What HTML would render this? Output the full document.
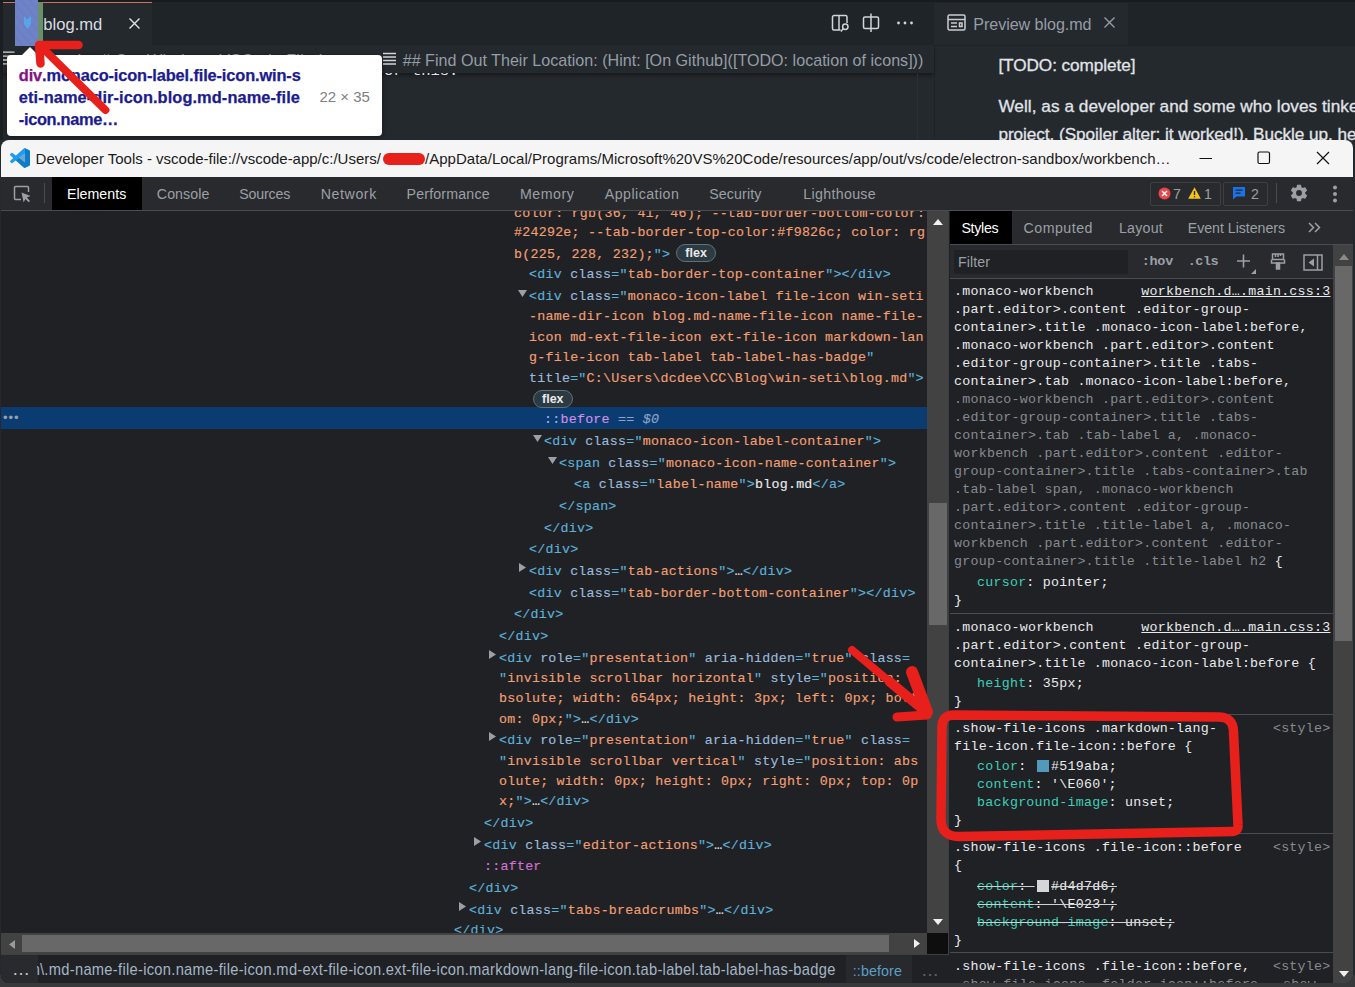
<!DOCTYPE html>
<html lang="en">
<head>
<meta charset="utf-8">
<title>DevTools screenshot</title>
<style>
*{box-sizing:border-box;margin:0;padding:0}
html,body{width:1355px;height:987px;overflow:hidden;background:#24292e}
body{position:relative;font-family:"Liberation Sans",sans-serif;color:#e1e4e8}
.abs{position:absolute}
.t{position:absolute;white-space:nowrap;line-height:1}
.mono{font-family:"Liberation Mono",monospace}
/* ---------- VS Code background ---------- */
#vs{position:absolute;left:0;top:0;width:1355px;height:150px;background:#1f2428;overflow:hidden}
#vs .edbg{position:absolute;left:0;top:46px;width:934px;height:100px;background:#24292e}
#vs .tab1{position:absolute;left:3px;top:2px;width:149px;height:43px;background:#24292e;border-top:1px solid #cf735f}
#vs .grp2{position:absolute;left:934px;top:0;width:421px;height:46px;background:#1f2428;border-left:1px solid #1b1f23}
#vs .tab2{position:absolute;left:934px;top:3px;width:194px;height:42px;background:#24292e}
#vs .prev{position:absolute;left:935px;top:46px;width:420px;height:100px;background:#24292e}

#vs .strip{position:absolute;left:0;top:0;width:3px;height:140px;background:#1b1f23}
#vs .hl-blue{position:absolute;left:15px;top:0;width:23px;height:46px;background:#6b84c6;background-image:repeating-linear-gradient(50deg,rgba(140,90,200,.0) 0 5px,rgba(140,90,200,.22) 5px 7px)}
#vs .hl-green{position:absolute;left:38px;top:2px;width:5px;height:43px;background:#6b8f66}
#vs .bc{position:absolute;left:3px;top:45px;width:931px;height:28px;background:#24292e;box-shadow:0 3px 4px -1px rgba(0,0,0,.45)}
#vs .vline{position:absolute;left:917px;top:73px;width:1px;height:70px;background:#2b3036}
.g{color:#959da5}
/* ---------- tooltip ---------- */
#tip{position:absolute;left:7px;top:55px;width:374.500px;height:80.500px;background:#fff;border-radius:4px;box-shadow:0 1px 4px rgba(0,0,0,.4)}

#tip .ptr{position:absolute;left:14px;top:-8px;width:0;height:0;border-left:9px solid transparent;border-right:9px solid transparent;border-bottom:9px solid #fff}
#tip .l{position:absolute;left:12px;white-space:nowrap;font-weight:bold;font-size:16.4px;line-height:1;color:#1c1c8c;-webkit-text-stroke:0.25px currentColor}
#tip .l b{color:#881280}
#tip .dim{position:absolute;left:312px;top:34px;font-size:15px;line-height:1;color:#808080;white-space:nowrap}
/* ---------- DevTools window ---------- */
#dt{position:absolute;left:1px;top:140px;width:1352px;height:843px;background:#202124;border-radius:8px;overflow:hidden}
#under{position:absolute;left:0;top:975px;width:1355px;height:12px;background:#38393b}
#dt .title{position:absolute;left:0;top:0;width:100%;height:37px;background:#f5f5f5}
#dt .bar{position:absolute;left:0;top:37px;width:100%;height:34px;background:#292a2d;border-bottom:1px solid #494c50}
#dt .tab{top:10px;font-size:14.2px;color:#9aa0a6;transform:scaleY(1.09);transform-origin:0 70%}
#dt .tab.on{color:#fff}
/* elements panel */
#el{position:absolute;left:0;top:71px;width:926px;height:722px;overflow:hidden;background:#202124}
#el .r{position:absolute;white-space:pre;font-family:"Liberation Mono",monospace;font-size:13.3px;letter-spacing:0.246px;line-height:20px;height:20px;-webkit-text-stroke:0.15px currentColor}
#el .sel{position:absolute;left:0;top:196px;width:926px;height:22px;background:#0a3c72}
.tg{color:#5db0d7}.an{color:#9bbbdc}.av{color:#f19f74}.tx{color:#e8eaed}
.ps{color:#cf8fe3}.ps1{color:#9fb0f0}.ps2{color:#d670d6}.eq{color:#8fa4c8}
.flex{letter-spacing:0;-webkit-text-stroke:0;display:inline-block;font-family:"Liberation Sans",sans-serif;font-size:12.5px;font-weight:bold;line-height:16px;height:18px;padding:0 8px;border:1px solid #5f717b;border-radius:9px;background:#2c3a42;color:#e8eaed;vertical-align:1px}
/* styles pane */
#st{position:absolute;left:948.5px;top:71px;width:383.5px;height:776px;overflow:hidden;background:#202124}
#st .stab{top:10px;font-size:14.2px;color:#9aa0a6;transform:scaleY(1.09);transform-origin:0 70%}
#t-filter,#t-cr1,#t-cr2{transform:scaleY(1.07);transform-origin:0 70%}
#st .stab.on{color:#fff}
#st .sl{position:absolute;white-space:pre;font-family:"Liberation Mono",monospace;font-size:13.3px;letter-spacing:0.246px;line-height:18px;height:18px;color:#e8eaed}
.w{color:#e8eaed}.gy{color:#858b90}.pn{color:#3dcfb9}
#st .lk{text-decoration:underline;color:#e8eaed}
#st .sl.gy{color:#858b90}
.sw{display:inline-block;width:12px;height:12px;margin-left:2px;margin-right:2.500px;vertical-align:-1.500px}
.st{text-decoration:line-through;text-decoration-color:#d0d0d0}
#vs .topstrip{position:absolute;left:0;top:0;width:1355px;height:2px;background:#191c20}
#t-p1,#t-p2,#t-p3{-webkit-text-stroke:0.3px #e1e4e8}
#t-tb0{letter-spacing:0.032px;margin-left:-0.10px}
#t-tb1{letter-spacing:0.077px;margin-left:-0.20px}
#t-tb2{letter-spacing:-0.164px;margin-left:0.30px}
#t-tb3{letter-spacing:0.565px;margin-left:-0.20px}
#t-tb4{letter-spacing:0.171px;margin-left:-0.40px}
#t-tb5{letter-spacing:0.558px;margin-left:0.90px}
#t-tb6{letter-spacing:0.462px;margin-left:0.80px}
#t-tb7{letter-spacing:0.144px;margin-left:0.20px}
#t-tb8{letter-spacing:0.328px;margin-left:0.30px}
#t-blog{letter-spacing:-0.007px;margin-left:0.30px}
#t-bc1{letter-spacing:0.009px;margin-left:-0.30px}
#t-prev{letter-spacing:-0.051px;margin-left:0.30px}
#t-p1{letter-spacing:-0.068px;margin-left:0.40px}
#t-tip1{letter-spacing:-0.137px;margin-left:-0.20px}
#t-tip2{letter-spacing:0.072px;margin-left:-0.20px}
#t-tip3{letter-spacing:-0.338px;margin-left:-0.20px}
#t-dim{letter-spacing:-0.024px;margin-left:0.50px}
#t-ttl1{letter-spacing:-0.008px;margin-left:0.10px}
#t-ttl2{letter-spacing:0.019px;margin-left:0.00px}
#t-s0{letter-spacing:-0.273px;margin-left:0.01px}
#t-s1{letter-spacing:0.504px;margin-left:0.00px}
#t-s2{letter-spacing:0.232px;margin-left:0.00px}
#t-s3{letter-spacing:-0.040px;margin-left:0.00px}
#t-filter{letter-spacing:0.078px;margin-left:0.00px}
#t-hov{letter-spacing:-0.277px;margin-left:0.70px}
#t-cls{letter-spacing:-0.552px;margin-left:0.80px}
#t-cr1{letter-spacing:0.293px;margin-left:-0.50px}
#t-cr2{letter-spacing:0.089px;margin-left:0.80px}
#t-sr1{letter-spacing:-0.125px;margin-left:0.58px}
#t-p2{letter-spacing:0.048px;margin-left:0.40px}
#t-p3{letter-spacing:-0.059px;margin-left:0.40px}
#t-bc0{letter-spacing:0.341px;margin-left:0.00px}
</style>
</head>
<body>
<div id="vs">
  <div class="edbg"></div>
  <div class="tab1"></div>
  <div class="grp2"></div>
  <div class="tab2"></div>
  <div class="prev"></div>

  <div class="strip"></div>
  <div class="topstrip"></div>
  <div class="bc"></div>
  <div class="vline"></div>
  <div class="hl-blue"></div>
  <div class="hl-green"></div>
  <svg class="abs" style="left:22px;top:15px" width="11" height="15" viewBox="0 0 11 15"><path d="M2 1 L5.5 4.5 L9 1 L9 9 L5.5 14 L2 9 Z" fill="#58a6e8"/></svg>
  <div class="t" id="t-blog" style="left:43px;top:17px;font-size:16.6px;color:#d9dce0">blog.md</div>
  <svg class="abs" style="left:128px;top:17px" width="13" height="13" viewBox="0 0 13 13"><path d="M1.5 1.5 L11.5 11.5 M11.5 1.5 L1.5 11.5" stroke="#e1e4e8" stroke-width="1.4" fill="none"/></svg>
  <!-- editor actions -->
  <svg class="abs" style="left:831px;top:13.5px" width="19" height="19" viewBox="0 0 19 19" fill="none" stroke="#d1d5da" stroke-width="1.5"><path d="M16 9 V3 a1.500 1.500 0 0 0 -1.500 -1.500 H3 a1.500 1.500 0 0 0 -1.500 1.500 V14.500 a1.500 1.500 0 0 0 1.500 1.500 H9.500 M8 1.500 V16"/><circle cx="14.300" cy="12.800" r="2.700"/><path d="M12.300 14.800 L9.800 17.400"/></svg>
  <svg class="abs" style="left:862px;top:13px" width="18" height="20" viewBox="0 0 18 20" fill="none" stroke="#d1d5da" stroke-width="1.5"><rect x="1.500" y="4" width="15" height="11.500" rx="1.500"/><path d="M9 0.500 V19"/></svg>
  <svg class="abs" style="left:896px;top:20px" width="18" height="6" viewBox="0 0 18 6" fill="#d1d5da"><circle cx="2.500" cy="3" r="1.400"/><circle cx="9" cy="3" r="1.400"/><circle cx="15.500" cy="3" r="1.400"/></svg>
  <!-- breadcrumbs -->
  <div class="t g" id="t-bc0" style="left:22px;top:51.500px;font-size:16.100px">blog.md &gt; # Get Windows VSCode File Icons &gt;</div>
  <svg class="abs" style="left:3px;top:51px" width="14" height="14" viewBox="0 0 14 14" stroke="#d1d5da" stroke-width="1.300"><path d="M0 1.200 H11.500 M0 5.100 H11.500 M0 9 H11.500 M0 12.900 H11.500"/></svg>
  <svg class="abs" style="left:383px;top:52px" width="14" height="14" viewBox="0 0 14 14" stroke="#d1d5da" stroke-width="1.3"><path d="M0 1.5 H13 M0 5 H13 M0 8.5 H13 M0 12 H13"/></svg>
  <div class="t g" id="t-bc1" style="left:403px;top:51.500px;font-size:16.1px">## Find Out Their Location: (Hint: [On Github]([TODO: location of icons]))</div>
  <div class="t mono" id="t-orthis" style="left:384px;top:64px;font-size:15.500px;color:#e1e4e8;clip-path:inset(9px 0 0 0)">or this:</div>
  <!-- preview tab -->
  <svg class="abs" style="left:946.500px;top:14px" width="19" height="17" viewBox="0 0 19 17" fill="none" stroke="#c9cdd2" stroke-width="1.500"><rect x="1" y="1" width="17" height="15" rx="1.500"/><path d="M1 5.500 H18 M4 9 H10 M4 12.500 H10 M12.500 9 H15 V12.500 H12.500 Z"/></svg>
  <div class="t g" id="t-prev" style="left:973px;top:16px;font-size:16.1px">Preview blog.md</div>
  <svg class="abs" style="left:1103px;top:16px" width="13" height="13" viewBox="0 0 13 13"><path d="M1.5 1.5 L11.5 11.5 M11.5 1.5 L1.5 11.5" stroke="#959da5" stroke-width="1.4" fill="none"/></svg>
  <div class="t" id="t-p1" style="left:998px;top:57px;font-size:17.2px;color:#e1e4e8">[TODO: complete]</div>
  <div class="t" id="t-p2" style="left:998px;top:97.5px;font-size:17.2px;color:#e1e4e8">Well, as a developer and some who loves tinke</div>
  <div class="t" id="t-p3" style="left:998px;top:125.5px;font-size:17.2px;color:#e1e4e8">project. (Spoiler alter: it worked!). Buckle up, he</div>
</div>
<div id="tip"><div class="ptr"></div>
  <div class="l" id="t-tip1" style="top:12px"><b>div</b>.monaco-icon-label.file-icon.win-s</div>
  <div class="l" id="t-tip2" style="top:34px">eti-name-dir-icon.blog.md-name-file</div>
  <div class="l" id="t-tip3" style="top:56px">-icon.name…</div>
  <div class="dim" id="t-dim">22 × 35</div>
</div>
<div id="under"></div>
<div id="dt">
  <div class="title">
    <svg class="abs" style="left:9px;top:8px" width="20" height="20" viewBox="0 0 100 100"><path d="M96.5 10.8 75.9 0.9a6.2 6.2 0 0 0-7.1 1.2L29.4 38 12.2 25a4.2 4.2 0 0 0-5.3.2L1.4 30.300000000000001a4.2 4.2 0 0 0 0 6.2L16.3 50 1.4 63.6a4.2 4.2 0 0 0 0 6.2l5.5 5a4.2 4.2 0 0 0 5.3.2L29.4 62l39.400000000000006 36a6.2 6.2 0 0 0 7.1 1.2l20.6-9.9A6.2 6.2 0 0 0 100 83.7V16.400000000000002a6.2 6.2 0 0 0-3.5-5.6zM75 72.7 45.1 50 75 27.3z" fill="#1f9cf0"/><path d="M75.9 99.1a6.2 6.2 0 0 1-7.1-1.2L29.4 62 75 27.3V0.9l20.6 9.9A6.2 6.2 0 0 1 100 16.4v67.3a6.2 6.2 0 0 1-3.5 5.6z" fill="#0065a9" opacity=".55"/></svg>
    <div class="t" id="t-ttl1" style="left:34.5px;top:10.5px;font-size:15px;color:#1b1b1b">Developer Tools - vscode-file://vscode-app/c:/Users/</div>
    <div class="abs" style="left:382px;top:13px;width:42px;height:12px;border-radius:6px;background:#e8201c"></div>
    <div class="t" id="t-ttl2" style="left:424px;top:10.5px;font-size:15px;color:#1b1b1b">/AppData/Local/Programs/Microsoft%20VS%20Code/resources/app/out/vs/code/electron-sandbox/workbench…</div>
    <svg class="abs" style="left:1198px;top:17px" width="14" height="3" viewBox="0 0 14 3"><path d="M0.5 1.5 H13" stroke="#111" stroke-width="1.2"/></svg>
    <svg class="abs" style="left:1256px;top:11px" width="14" height="14" viewBox="0 0 14 14"><rect x="1" y="1" width="11.5" height="11.5" rx="1.5" fill="none" stroke="#111" stroke-width="1.2"/></svg>
    <svg class="abs" style="left:1315px;top:11px" width="14" height="14" viewBox="0 0 14 14"><path d="M1 1 L13 13 M13 1 L1 13" stroke="#111" stroke-width="1.2" fill="none"/></svg>
  </div>
  <div class="bar">
    <svg class="abs" style="left:12px;top:8px" width="19" height="19" viewBox="0 0 19 19" fill="none"><path d="M8 14.5 H2.5 a1 1 0 0 1 -1-1 V2.5 a1 1 0 0 1 1-1 H14.5 a1 1 0 0 1 1 1 V7" stroke="#9aa0a6" stroke-width="1.5"/><path d="M8.5 7.5 L17.5 11 L13.8 12.6 L17 16 L15.6 17.3 L12.4 13.9 L10.6 17.5 Z" fill="#9aa0a6"/></svg>
    <div class="abs" style="left:43px;top:6px;width:1px;height:20px;background:#4a4c50"></div>
    <div class="abs" style="left:51px;top:0;width:90px;height:33px;background:#000"></div>
    <div class="t tab on" id="t-tb0" style="left:66px">Elements</div>
    <div class="t tab" id="t-tb1" style="left:156px">Console</div>
    <div class="t tab" id="t-tb2" style="left:238px">Sources</div>
    <div class="t tab" id="t-tb3" style="left:320px">Network</div>
    <div class="t tab" id="t-tb4" style="left:406px">Performance</div>
    <div class="t tab" id="t-tb5" style="left:518px">Memory</div>
    <div class="t tab" id="t-tb6" style="left:603px">Application</div>
    <div class="t tab" id="t-tb7" style="left:708px">Security</div>
    <div class="t tab" id="t-tb8" style="left:802px">Lighthouse</div>
    <!-- counters -->
    <div class="abs" style="left:1149px;top:5px;width:71px;height:24px;border:1px solid #3c4043;border-radius:2px"></div>
    <svg class="abs" style="left:1157px;top:10px" width="13" height="13" viewBox="0 0 13 13"><circle cx="6.5" cy="6.5" r="6" fill="#e9454d"/><path d="M4 4 L9 9 M9 4 L4 9" stroke="#fff" stroke-width="1.4"/></svg>
    <div class="t" id="t-c7" style="left:1172px;top:10px;font-size:14.2px;color:#9aa0a6">7</div>
    <svg class="abs" style="left:1187px;top:10px" width="13" height="12" viewBox="0 0 13 12"><path d="M6.5 0.3 L12.8 11.7 H0.2 Z" fill="#f5c518"/><path d="M6.5 4 V8" stroke="#292a2d" stroke-width="1.4"/><circle cx="6.5" cy="9.8" r=".8" fill="#292a2d"/></svg>
    <div class="t" id="t-c1" style="left:1203px;top:10px;font-size:14.2px;color:#9aa0a6">1</div>
    <div class="abs" style="left:1222px;top:5px;width:45px;height:24px;border:1px solid #3c4043;border-radius:2px"></div>
    <svg class="abs" style="left:1231px;top:9px" width="14" height="14" viewBox="0 0 14 14"><path d="M1 1 H13 V10.5 H4.5 L1 13.5 Z" fill="#1a73e8"/><path d="M3.5 4.2 H10.5 M3.5 7.2 H8.5" stroke="#292a2d" stroke-width="1.2"/></svg>
    <div class="t" id="t-c2" style="left:1250px;top:10px;font-size:14.2px;color:#9aa0a6">2</div>
    <div class="abs" style="left:1275px;top:6px;width:1px;height:20px;background:#4a4c50"></div>
    <svg class="abs" style="left:1288px;top:6px" width="20" height="20" viewBox="0 0 24 24"><path fill="#9aa0a6" d="M19.43 12.98c.04-.32.07-.64.07-.98s-.03-.66-.07-.98l2.11-1.65a.5.5 0 0 0 .12-.64l-2-3.46a.5.5 0 0 0-.61-.22l-2.49 1a7.3 7.3 0 0 0-1.69-.98l-.38-2.65A.49.49 0 0 0 14 2h-4a.49.49 0 0 0-.49.42l-.38 2.65c-.61.25-1.17.59-1.69.98l-2.49-1a.5.5 0 0 0-.61.22l-2 3.46a.5.5 0 0 0 .12.64l2.11 1.65c-.04.32-.07.65-.07.98s.03.66.07.98l-2.11 1.65a.5.5 0 0 0-.12.64l2 3.46c.12.22.39.3.61.22l2.49-1c.52.4 1.08.73 1.69.98l.38 2.65c.03.24.24.42.49.42h4c.25 0 .46-.18.49-.42l.38-2.65c.61-.25 1.17-.59 1.69-.98l2.49 1c.23.09.49 0 .61-.22l2-3.46a.5.5 0 0 0-.12-.64l-2.11-1.65zM12 15.5a3.5 3.500 0 1 1 0-7 3.500 3.500 0 0 1 0 7z"/></svg>
    <svg class="abs" style="left:1331px;top:8px" width="6" height="18" viewBox="0 0 6 18" fill="#9aa0a6"><circle cx="3" cy="2.500" r="2"/><circle cx="3" cy="9" r="2"/><circle cx="3" cy="15.500" r="2"/></svg>
  </div>
<div id="el">
<div class="sel"></div>
<div class="t" id="t-dots" style="left:2px;top:200px;font-size:13px;color:#9aa0a6;letter-spacing:1px">•••</div>
<div class="r" id="t-e0" style="left:513px;top:-7px"><span class="av">color: rgb(36, 41, 46); --tab-border-bottom-color:</span></div>
<div class="r" id="t-e1" style="left:513px;top:12px"><span class="av">#24292e; --tab-border-top-color:#f9826c; color: rg</span></div>
<div class="r" id="t-e2" style="left:513px;top:33px"><span class="av">b(225, 228, 232);</span><span class="tg">"&gt;</span><span class="flex" style="margin-left:6px">flex</span></div>
<div class="r" id="t-e3" style="left:528px;top:54px"><span class="tg">&lt;div </span><span class="an">class</span><span class="tg">="</span><span class="av">tab-border-top-container</span><span class="tg">"&gt;&lt;/div&gt;</span></div>
<svg class="abs" style="left:516.5px;top:79px" width="9" height="7" viewBox="0 0 9 7"><path d="M0 0 H9 L4.5 7 Z" fill="#9aa0a6"/></svg>
<div class="r" id="t-e4" style="left:528px;top:76px"><span class="tg">&lt;div </span><span class="an">class</span><span class="tg">="</span><span class="av">monaco-icon-label file-icon win-seti</span></div>
<div class="r" id="t-e5" style="left:528px;top:96px"><span class="av">-name-dir-icon blog.md-name-file-icon name-file-</span></div>
<div class="r" id="t-e6" style="left:528px;top:117px"><span class="av">icon md-ext-file-icon ext-file-icon markdown-lan</span></div>
<div class="r" id="t-e7" style="left:528px;top:137px"><span class="av">g-file-icon tab-label tab-label-has-badge</span><span class="tg">"</span></div>
<div class="r" id="t-e8" style="left:528px;top:158px"><span class="an">title</span><span class="tg">="</span><span class="av">C:\Users\dcdee\CC\Blog\win-seti\blog.md</span><span class="tg">"&gt;</span></div>
<div class="r" id="t-e9" style="left:532px;top:179px"><span class="flex">flex</span></div>
<div class="r" id="t-e10" style="left:543px;top:199px"><span class="ps1">::</span><span class="ps">before</span><span class="eq"> == <i>$0</i></span></div>
<svg class="abs" style="left:531.5px;top:224px" width="9" height="7" viewBox="0 0 9 7"><path d="M0 0 H9 L4.5 7 Z" fill="#9aa0a6"/></svg>
<div class="r" id="t-e11" style="left:543px;top:221px"><span class="tg">&lt;div </span><span class="an">class</span><span class="tg">="</span><span class="av">monaco-icon-label-container</span><span class="tg">"&gt;</span></div>
<svg class="abs" style="left:546.5px;top:246px" width="9" height="7" viewBox="0 0 9 7"><path d="M0 0 H9 L4.5 7 Z" fill="#9aa0a6"/></svg>
<div class="r" id="t-e12" style="left:558px;top:243px"><span class="tg">&lt;span </span><span class="an">class</span><span class="tg">="</span><span class="av">monaco-icon-name-container</span><span class="tg">"&gt;</span></div>
<div class="r" id="t-e13" style="left:573px;top:264px"><span class="tg">&lt;a </span><span class="an">class</span><span class="tg">="</span><span class="av">label-name</span><span class="tg">"&gt;</span><span class="tx">blog.md</span><span class="tg">&lt;/a&gt;</span></div>
<div class="r" id="t-e14" style="left:558px;top:286px"><span class="tg">&lt;/span&gt;</span></div>
<div class="r" id="t-e15" style="left:543px;top:308px"><span class="tg">&lt;/div&gt;</span></div>
<div class="r" id="t-e16" style="left:528px;top:329px"><span class="tg">&lt;/div&gt;</span></div>
<svg class="abs" style="left:518px;top:351.5px" width="7" height="9" viewBox="0 0 7 9"><path d="M0 0 V9 L7 4.5 Z" fill="#9aa0a6"/></svg>
<div class="r" id="t-e17" style="left:528px;top:351px"><span class="tg">&lt;div </span><span class="an">class</span><span class="tg">="</span><span class="av">tab-actions</span><span class="tg">"&gt;</span><span class="tx">…</span><span class="tg">&lt;/div&gt;</span></div>
<div class="r" id="t-e18" style="left:528px;top:373px"><span class="tg">&lt;div </span><span class="an">class</span><span class="tg">="</span><span class="av">tab-border-bottom-container</span><span class="tg">"&gt;&lt;/div&gt;</span></div>
<div class="r" id="t-e19" style="left:513px;top:394px"><span class="tg">&lt;/div&gt;</span></div>
<div class="r" id="t-e20" style="left:498px;top:416px"><span class="tg">&lt;/div&gt;</span></div>
<svg class="abs" style="left:488px;top:438.5px" width="7" height="9" viewBox="0 0 7 9"><path d="M0 0 V9 L7 4.5 Z" fill="#9aa0a6"/></svg>
<div class="r" id="t-e21" style="left:498px;top:438px"><span class="tg">&lt;div </span><span class="an">role</span><span class="tg">="</span><span class="av">presentation</span><span class="tg">" </span><span class="an">aria-hidden</span><span class="tg">="</span><span class="av">true</span><span class="tg">" </span><span class="an">class</span><span class="tg">=</span></div>
<div class="r" id="t-e22" style="left:498px;top:458px"><span class="tg">"</span><span class="av">invisible scrollbar horizontal</span><span class="tg">" </span><span class="an">style</span><span class="tg">="</span><span class="av">position: a</span></div>
<div class="r" id="t-e23" style="left:498px;top:478px"><span class="av">bsolute; width: 654px; height: 3px; left: 0px; bott</span></div>
<div class="r" id="t-e24" style="left:498px;top:499px"><span class="av">om: 0px;</span><span class="tg">"&gt;</span><span class="tx">…</span><span class="tg">&lt;/div&gt;</span></div>
<svg class="abs" style="left:488px;top:520.5px" width="7" height="9" viewBox="0 0 7 9"><path d="M0 0 V9 L7 4.5 Z" fill="#9aa0a6"/></svg>
<div class="r" id="t-e25" style="left:498px;top:520px"><span class="tg">&lt;div </span><span class="an">role</span><span class="tg">="</span><span class="av">presentation</span><span class="tg">" </span><span class="an">aria-hidden</span><span class="tg">="</span><span class="av">true</span><span class="tg">" </span><span class="an">class</span><span class="tg">=</span></div>
<div class="r" id="t-e26" style="left:498px;top:541px"><span class="tg">"</span><span class="av">invisible scrollbar vertical</span><span class="tg">" </span><span class="an">style</span><span class="tg">="</span><span class="av">position: abs</span></div>
<div class="r" id="t-e27" style="left:498px;top:561px"><span class="av">olute; width: 0px; height: 0px; right: 0px; top: 0p</span></div>
<div class="r" id="t-e28" style="left:498px;top:581px"><span class="av">x;</span><span class="tg">"&gt;</span><span class="tx">…</span><span class="tg">&lt;/div&gt;</span></div>
<div class="r" id="t-e29" style="left:483px;top:603px"><span class="tg">&lt;/div&gt;</span></div>
<svg class="abs" style="left:473px;top:625.5px" width="7" height="9" viewBox="0 0 7 9"><path d="M0 0 V9 L7 4.5 Z" fill="#9aa0a6"/></svg>
<div class="r" id="t-e30" style="left:483px;top:625px"><span class="tg">&lt;div </span><span class="an">class</span><span class="tg">="</span><span class="av">editor-actions</span><span class="tg">"&gt;</span><span class="tx">…</span><span class="tg">&lt;/div&gt;</span></div>
<div class="r" id="t-e31" style="left:483px;top:646px"><span class="ps2">::after</span></div>
<div class="r" id="t-e32" style="left:468px;top:668px"><span class="tg">&lt;/div&gt;</span></div>
<svg class="abs" style="left:458px;top:690.5px" width="7" height="9" viewBox="0 0 7 9"><path d="M0 0 V9 L7 4.5 Z" fill="#9aa0a6"/></svg>
<div class="r" id="t-e33" style="left:468px;top:690px"><span class="tg">&lt;div </span><span class="an">class</span><span class="tg">="</span><span class="av">tabs-breadcrumbs</span><span class="tg">"&gt;</span><span class="tx">…</span><span class="tg">&lt;/div&gt;</span></div>
<div class="r" id="t-e34" style="left:453px;top:710px"><span class="tg">&lt;/div&gt;</span></div>
</div>
<div id="st">
<div class="abs" style="left:0;top:0;width:100%;height:34px;background:#292a2d;border-bottom:1px solid #494c50"></div>
<div class="abs" style="left:0;top:0;width:62px;height:33px;background:#000"></div>
<div class="t stab on" id="t-s0" style="left:11.9px">Styles</div>
<div class="t stab" id="t-s1" style="left:74px">Computed</div>
<div class="t stab" id="t-s2" style="left:169.5px">Layout</div>
<div class="t stab" id="t-s3" style="left:238.3px">Event Listeners</div>
<svg class="abs" style="left:358.5px;top:11px" width="13" height="11" viewBox="0 0 13 11" fill="none" stroke="#9aa0a6" stroke-width="1.5"><path d="M1 1 L5.5 5.5 L1 10 M7 1 L11.5 5.5 L7 10"/></svg>
<div class="abs" style="left:0;top:34px;width:385px;height:34px;background:#292a2d;border-bottom:1px solid #494c50"></div>
<div class="abs" style="left:4px;top:38.6px;width:174px;height:24px;background:#202124"></div>
<div class="t" id="t-filter" style="left:8.5px;top:43.5px;font-size:14.2px;color:#9aa0a6">Filter</div>
<div class="t mono" id="t-hov" style="left:191.5px;top:44px;font-size:13.5px;font-weight:bold;color:#9aa0a6">:hov</div>
<div class="t mono" id="t-cls" style="left:237.5px;top:44px;font-size:13.5px;font-weight:bold;color:#9aa0a6">.cls</div>
<svg class="abs" style="left:286.5px;top:42px" width="21" height="22" viewBox="0 0 21 22"><path d="M7.5 1.5 V14.500 M1 8 H14" stroke="#9aa0a6" stroke-width="1.6" fill="none"/><path d="M20 16 V21 H15 Z" fill="#9aa0a6"/></svg>
<svg class="abs" style="left:320.5px;top:41.5px" width="16" height="18" viewBox="0 0 16 18" fill="none" stroke="#9aa0a6" stroke-width="1.5"><path d="M2.500 1 H13.500 V6.500 H2.500 Z"/><path d="M5.500 1 V4 M8 1 V4 M10.500 1 V3"/><path d="M1.500 6.500 V10 H14.500 V6.500"/><path d="M6.500 10 V16 H9.500 V10 Z" fill="#9aa0a6"/></svg>
<svg class="abs" style="left:353.5px;top:42.5px" width="20" height="17" viewBox="0 0 20 17" fill="none" stroke="#9aa0a6" stroke-width="1.5"><rect x="1" y="1" width="18" height="15"/><path d="M14.500 1 V16"/><path d="M11 4.500 V12.500 L5.500 8.500 Z" fill="#9aa0a6" stroke="none"/></svg>
<div class="sl " id="t-l1" style="left:4.5px;top:72px"><span class="w">.monaco-workbench</span></div>
<div class="sl lk" id="t-lk1" style="right:2.5px;top:72px">workbench.d….main.css:3</div>
<div class="sl " id="t-l2" style="left:4.5px;top:90px"><span class="w">.part.editor&gt;.content .editor-group-</span></div>
<div class="sl " id="t-l3" style="left:4.5px;top:108px"><span class="w">container&gt;.title .monaco-icon-label:before,</span></div>
<div class="sl " id="t-l4" style="left:4.5px;top:126px"><span class="w">.monaco-workbench .part.editor&gt;.content</span></div>
<div class="sl " id="t-l5" style="left:4.5px;top:144px"><span class="w">.editor-group-container&gt;.title .tabs-</span></div>
<div class="sl " id="t-l6" style="left:4.5px;top:162px"><span class="w">container&gt;.tab .monaco-icon-label:before,</span></div>
<div class="sl " id="t-l7" style="left:4.5px;top:180px"><span class="gy">.monaco-workbench .part.editor&gt;.content</span></div>
<div class="sl " id="t-l8" style="left:4.5px;top:198px"><span class="gy">.editor-group-container&gt;.title .tabs-</span></div>
<div class="sl " id="t-l9" style="left:4.5px;top:216px"><span class="gy">container&gt;.tab .tab-label a, .monaco-</span></div>
<div class="sl " id="t-l10" style="left:4.5px;top:234px"><span class="gy">workbench .part.editor&gt;.content .editor-</span></div>
<div class="sl " id="t-l11" style="left:4.5px;top:252px"><span class="gy">group-container&gt;.title .tabs-container&gt;.tab</span></div>
<div class="sl " id="t-l12" style="left:4.5px;top:270px"><span class="gy">.tab-label span, .monaco-workbench</span></div>
<div class="sl " id="t-l13" style="left:4.5px;top:288px"><span class="gy">.part.editor&gt;.content .editor-group-</span></div>
<div class="sl " id="t-l14" style="left:4.5px;top:306px"><span class="gy">container&gt;.title .title-label a, .monaco-</span></div>
<div class="sl " id="t-l15" style="left:4.5px;top:324px"><span class="gy">workbench .part.editor&gt;.content .editor-</span></div>
<div class="sl " id="t-l16" style="left:4.5px;top:342px"><span class="gy">group-container&gt;.title .title-label h2</span><span class="w"> {</span></div>
<div class="sl " id="t-l17" style="left:27.5px;top:363px"><span class="pn">cursor</span><span class="w">: pointer;</span></div>
<div class="sl " id="t-l18" style="left:4.5px;top:381px"><span class="w">}</span></div>
<div class="abs" style="left:0;top:402px;width:385px;height:1px;background:#494c50"></div>
<div class="sl " id="t-l19" style="left:4.5px;top:408px"><span class="w">.monaco-workbench</span></div>
<div class="sl lk" id="t-lk2" style="right:2.5px;top:408px">workbench.d….main.css:3</div>
<div class="sl " id="t-l20" style="left:4.5px;top:426px"><span class="w">.part.editor&gt;.content .editor-group-</span></div>
<div class="sl " id="t-l21" style="left:4.5px;top:444px"><span class="w">container&gt;.title .monaco-icon-label:before {</span></div>
<div class="sl " id="t-l22" style="left:27.5px;top:464px"><span class="pn">height</span><span class="w">: 35px;</span></div>
<div class="sl " id="t-l23" style="left:4.5px;top:482px"><span class="w">}</span></div>
<div class="abs" style="left:0;top:503px;width:385px;height:1px;background:#494c50"></div>
<div class="sl " id="t-l24" style="left:4.5px;top:509px"><span class="w">.show-file-icons .markdown-lang-</span></div>
<div class="sl gy" id="t-sr1" style="right:2.5px;top:509px">&lt;style&gt;</div>
<div class="sl " id="t-l25" style="left:4.5px;top:527px"><span class="w">file-icon.file-icon::before {</span></div>
<div class="sl " id="t-l26" style="left:27.5px;top:547px"><span class="pn">color</span><span class="w">: </span><span class="sw" style="background:#519aba"></span><span class="w">#519aba;</span></div>
<div class="sl " id="t-l27" style="left:27.5px;top:565px"><span class="pn">content</span><span class="w">: '\E060';</span></div>
<div class="sl " id="t-l28" style="left:27.5px;top:583px"><span class="pn">background-image</span><span class="w">: unset;</span></div>
<div class="sl " id="t-l29" style="left:4.5px;top:601px"><span class="w">}</span></div>
<div class="abs" style="left:0;top:622px;width:385px;height:1px;background:#494c50"></div>
<div class="sl " id="t-l30" style="left:4.5px;top:628px"><span class="w">.show-file-icons .file-icon::before</span></div>
<div class="sl gy" id="t-sr2" style="right:2.5px;top:628px">&lt;style&gt;</div>
<div class="sl " id="t-l31" style="left:4.5px;top:646px"><span class="w">{</span></div>
<div class="sl " id="t-l32" style="left:27.5px;top:667px"><span class="st"><span class="pn">color</span><span class="w">: </span><span class="sw" style="background:#d4d7d6"></span><span class="w">#d4d7d6;</span></span></div>
<div class="sl " id="t-l33" style="left:27.5px;top:685px"><span class="st"><span class="pn">content</span><span class="w">: '\E023';</span></span></div>
<div class="sl " id="t-l34" style="left:27.5px;top:703px"><span class="st"><span class="pn">background-image</span><span class="w">: unset;</span></span></div>
<div class="sl " id="t-l35" style="left:4.5px;top:721px"><span class="w">}</span></div>
<div class="abs" style="left:0;top:741px;width:385px;height:1px;background:#494c50"></div>
<div class="sl " id="t-l36" style="left:4.5px;top:747px"><span class="w">.show-file-icons .file-icon::before,</span></div>
<div class="sl gy" id="t-sr3" style="right:2.5px;top:747px">&lt;style&gt;</div>
<div class="sl " id="t-l37" style="left:4.5px;top:765px"><span class="gy">.show-file-icons .folder-icon::before, .show-</span></div>
</div>
  <!-- elements vertical scrollbar (abs x 927..948.5, y 211..933) -->
  <div class="abs" style="left:926px;top:71px;width:21px;height:722px;background:#424242"></div>
  <div class="abs" style="left:928px;top:363px;width:17.5px;height:122px;background:#686868"></div>
  <svg class="abs" style="left:931.5px;top:79px" width="10" height="6" viewBox="0 0 10 6"><path d="M0 6 H10 L5 0 Z" fill="#f1f1f1"/></svg>
  <svg class="abs" style="left:931.5px;top:778.5px" width="10" height="6" viewBox="0 0 10 6"><path d="M0 0 H10 L5 6 Z" fill="#f1f1f1"/></svg>
  <div class="abs" style="left:947px;top:71px;width:1px;height:776px;background:#3c4043"></div>
  <!-- elements horizontal scrollbar (abs y 933..954) -->
  <div class="abs" style="left:0;top:793px;width:926px;height:21px;background:#424242"></div>
  <div class="abs" style="left:21px;top:795px;width:866.5px;height:17px;background:#686868"></div>
  <svg class="abs" style="left:8px;top:799.5px" width="6" height="9" viewBox="0 0 6 9"><path d="M6 0 V9 L0 4.5 Z" fill="#9a9a9a"/></svg>
  <svg class="abs" style="left:913px;top:799px" width="6" height="9" viewBox="0 0 6 9"><path d="M0 0 V9 L6 4.5 Z" fill="#f1f1f1"/></svg>
  <div class="abs" style="left:926px;top:793px;width:21px;height:21px;background:#0e0e0e"></div>
  <!-- crumbs bar -->
  <div class="abs" style="left:0;top:814px;width:947.5px;height:33px;background:#202124;border-top:1px solid #3c4043"></div>
  <div class="abs" style="left:0;top:815px;width:36.5px;height:32px;background:#292a2d"></div>
  <div class="abs" style="left:845px;top:815px;width:66px;height:32px;background:#27292d"></div>
  <div class="t" id="t-cr0" style="left:11px;top:820px;font-size:18px;color:#c4c7ca;letter-spacing:1.2px">…</div>
  <div class="t" id="t-cr1" style="left:36.5px;top:823px;font-size:14.7px;color:#a4b5c4"><span style="display:inline-block;width:3px;overflow:hidden;vertical-align:top;direction:rtl;letter-spacing:0">n</span>\.md-name-file-icon.name-file-icon.md-ext-file-icon.ext-file-icon.markdown-lang-file-icon.tab-label.tab-label-has-badge</div>
  <div class="t" id="t-cr2" style="left:851px;top:823.5px;font-size:14.3px;color:#5e9fc6">::before</div>
  <div class="t" id="t-cr3" style="left:920px;top:820.5px;font-size:18px;color:#5f6368;letter-spacing:1.2px">…</div>
  <!-- styles scrollbar (abs x 1333..1353, y 245..983) -->
  <div class="abs" style="left:1332px;top:71px;width:21px;height:34px;background:#292a2d;border-bottom:1px solid #494c50"></div>
  <div class="abs" style="left:1332px;top:105px;width:21px;height:742px;background:#424242"></div>
  <div class="abs" style="left:1334px;top:126px;width:17px;height:375px;background:#686868"></div>
  <svg class="abs" style="left:1337.500px;top:113.500px" width="10" height="6" viewBox="0 0 10 6"><path d="M0 6 H10 L5 0 Z" fill="#8a8a8a"/></svg>
  <svg class="abs" style="left:1337.500px;top:830.500px" width="10" height="6" viewBox="0 0 10 6"><path d="M0 0 H10 L5 6 Z" fill="#f1f1f1"/></svg>
</div>
<svg id="annot" class="abs" style="left:0;top:0;pointer-events:none" width="1355" height="987" viewBox="0 0 1355 987" fill="none" stroke="#e8201c" stroke-linecap="round" stroke-linejoin="round">
  <path d="M105.400 110 L42 47.500" stroke-width="8"/>
  <path d="M78.500 45 L40 45" stroke-width="8.500"/>
  <path d="M39 45 L40.500 63.500" stroke-width="8.500"/>
  <path d="M852 650 L890 682" stroke-width="8"/>
  <path d="M890 682 L926 712" stroke-width="10"/>
  <path d="M912 672 L927 712" stroke-width="12"/>
  <path d="M897 717 L927 715" stroke-width="9"/>
  <path d="M954 715 L1218 717 Q1233.500 717 1233.500 732 L1238 825 Q1238.500 831.500 1232 831.500 L960 836.500 Q941 837 941 819 L942 727 Q942 715 954 715 Z" stroke-width="9.500"/>
</svg>
</body>
</html>
